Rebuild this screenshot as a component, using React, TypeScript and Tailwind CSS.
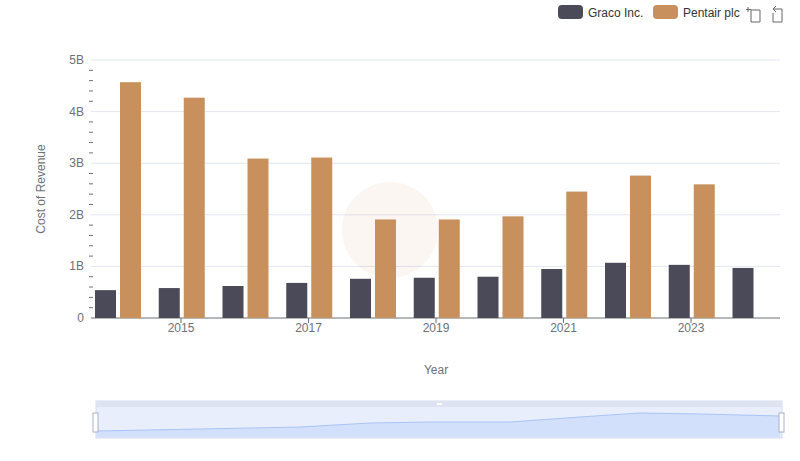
export default function App() {
  const graco = [0.54, 0.58, 0.62, 0.68, 0.76, 0.78, 0.8, 0.95, 1.07, 1.03, 0.97];
  const pentair = [4.57, 4.27, 3.09, 3.11, 1.91, 1.91, 1.97, 2.45, 2.76, 2.59];
  const y0 = 318, k = 51.6;
  const minors: number[] = [];
  for (let i = 0; i <= 25; i++) if (i % 5 !== 0) minors.push(y0 - i * k / 5);
  return (
    <div className="w-[800px] h-[461px] bg-white relative" style={{ fontFamily: '"Liberation Sans", Arial, sans-serif' }}>
      <svg width="800" height="461" className="absolute left-0 top-0">
        {[0, 1, 2, 3, 4, 5].map(i => (
          <line key={i} x1="91" x2="780" y1={y0 - i * k} y2={y0 - i * k} stroke={i === 0 ? "#6e7079" : "#e0e6f1"} />
        ))}
        {minors.map((y, i) => <line key={i} x1="89" x2="93" y1={y} y2={y} stroke="#6e7079" />)}
        {[0, 1, 2, 3, 4, 5].map(i => (
          <text key={i} x="84" y={y0 - i * k + 4} textAnchor="end" fontSize="12" fill="#6e7079">{i === 0 ? "0" : i + "B"}</text>
        ))}
        <g opacity="0.08">
          <circle cx="390" cy="230" r="48" fill="#c8905c" />
        </g>
        {graco.map((v, i) => {
          const c = 117.5 + 63.75 * i;
          return <rect key={i} x={c - 22.5} y={y0 - v * k} width="21" height={v * k} fill="#4a4a58" />;
        })}
        {pentair.map((v, i) => {
          const c = 117.5 + 63.75 * i;
          return <rect key={i} x={c + 2.5} y={y0 - v * k} width="21" height={v * k} fill="#c8905c" />;
        })}
        {[0, 1, 2, 3, 4].map(i => {
          const x = 181 + 127.5 * i;
          return (
            <g key={i}>
              <line x1={x} x2={x} y1={y0} y2={y0 + 5} stroke="#6e7079" />
              <text x={x} y="332" textAnchor="middle" fontSize="12" fill="#6e7079">{2015 + 2 * i}</text>
            </g>
          );
        })}
        <text x="436" y="374" textAnchor="middle" fontSize="12" fill="#6e7079">Year</text>
        <text x="45" y="189" textAnchor="middle" fontSize="12" fill="#6e7079" transform="rotate(-90 45 189)">Cost of Revenue</text>
        {/* legend */}
        <rect x="558" y="5" width="25" height="14" rx="4" fill="#4a4a58" />
        <text x="588" y="17" fontSize="12" fill="#333">Graco Inc.</text>
        <rect x="653" y="5" width="25" height="14" rx="4" fill="#c8905c" />
        <text x="683" y="17" fontSize="12" fill="#333">Pentair plc</text>
        <g stroke="#666" fill="none" strokeWidth="1">
          <path d="M748 7v5M746 9.5h5M751 10h9v12h-9z" />
          <path d="M776 6l-3 3 3 3M773 9h9v13h-9v-9" />
        </g>
        {/* datazoom */}
        <rect x="96" y="401" width="686" height="37" fill="#e8eefc" stroke="#d2dbee" />
        <rect x="96" y="401" width="686" height="6" fill="#dde3f0" />
        <path d="M97 431 L200 429 L300 427 L370 423 L430 422 L510 422 L580 417 L640 413 L700 414 L780 416 L780 437 L97 437Z" fill="#d3e0fb" />
        <path d="M97 431 L200 429 L300 427 L370 423 L430 422 L510 422 L580 417 L640 413 L700 414 L780 416" fill="none" stroke="#aac4f5" />
        <rect x="437" y="403" width="5" height="2" fill="#fff" />
        <rect x="93" y="413" width="5" height="19" fill="#fff" stroke="#a7b2c9" />
        <rect x="779" y="413" width="5" height="19" fill="#fff" stroke="#a7b2c9" />
      </svg>
    </div>
  );
}
